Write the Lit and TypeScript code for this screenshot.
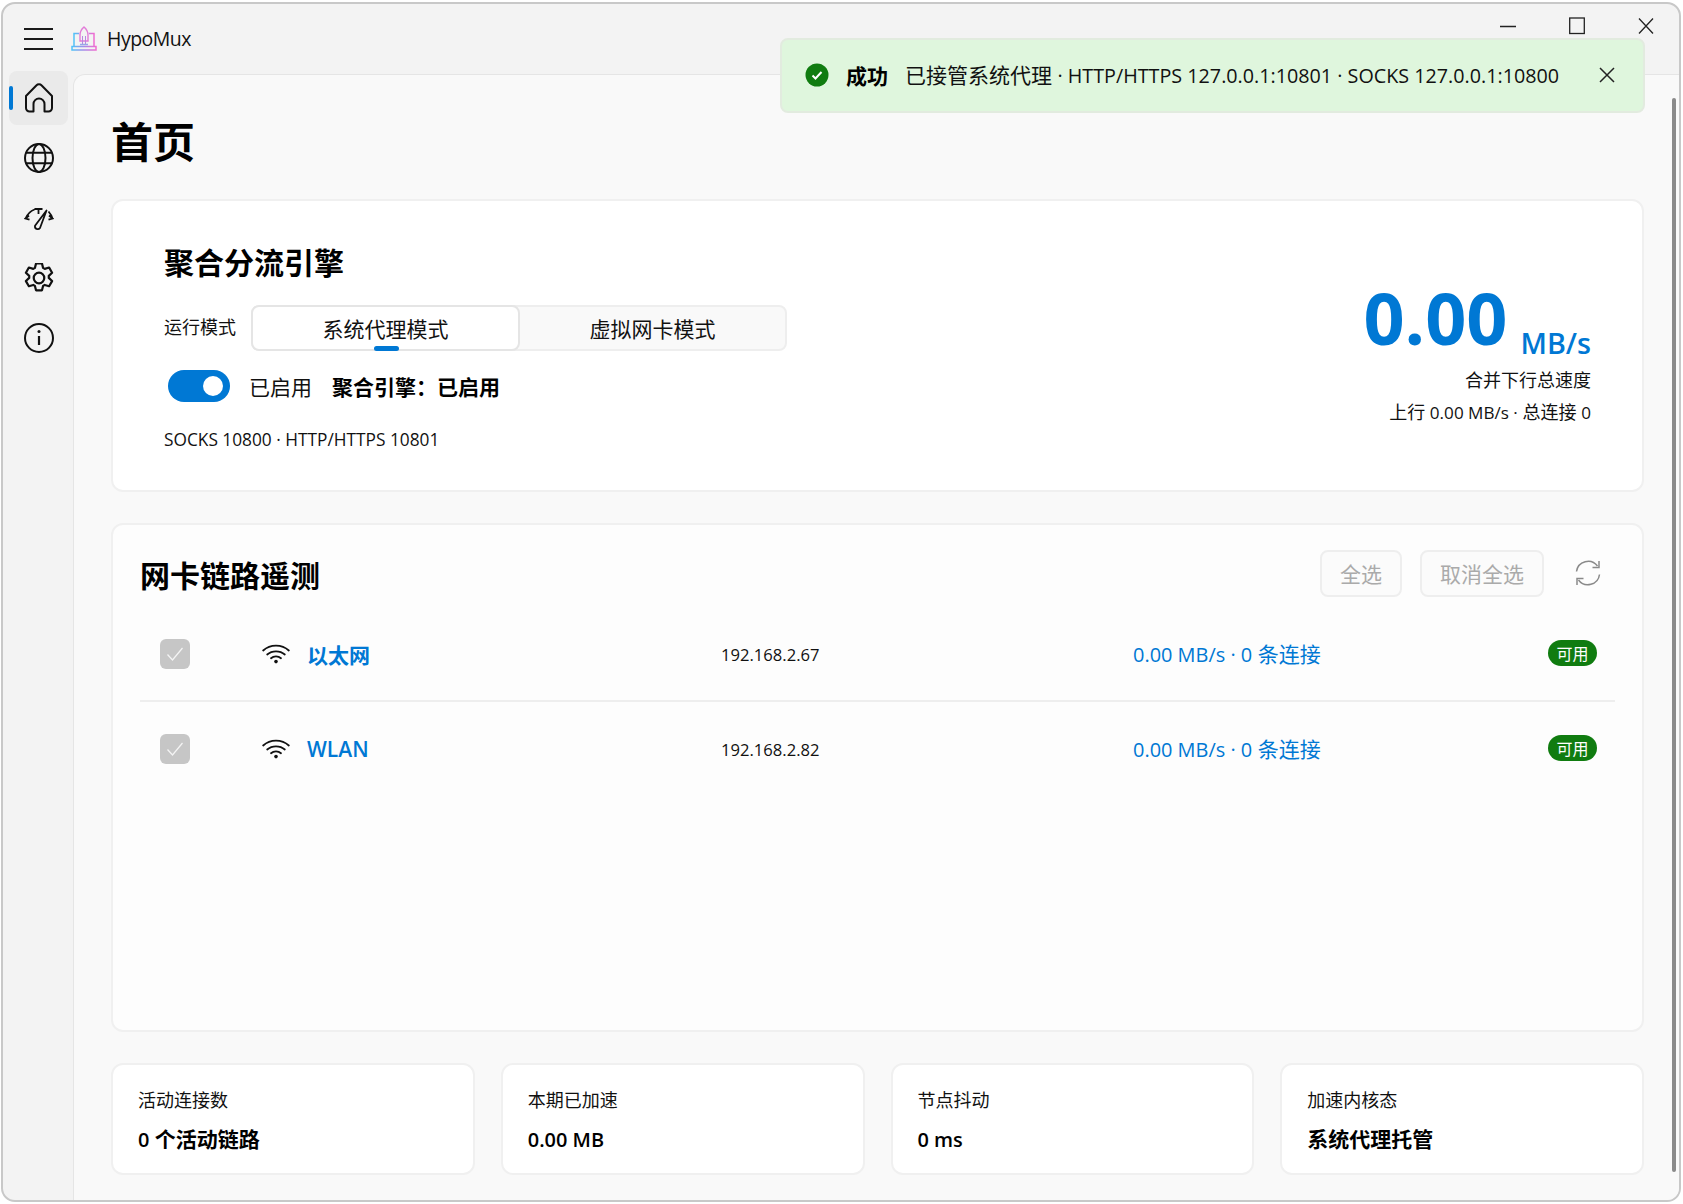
import { LitElement, html, css, svg } from 'lit';
import { customElement } from 'lit/decorators.js';

// latin runs get .lat so they come out closer to the reference's narrower latin face
const stats = [
  { label: '活动连接数', value: html`<span class="lat">0</span> 个活动链路` },
  { label: '本期已加速', value: html`<span class="lat">0.00 MB</span>` },
  { label: '节点抖动', value: html`<span class="lat">0 ms</span>` },
  { label: '加速内核态', value: html`系统代理托管` },
];

const adapters = [
  { name: '以太网', ip: '192.168.2.67', bold: true },
  { name: 'WLAN', ip: '192.168.2.82', bold: false },
];

const navIcons = [
  svg`<path d="M2 13 12.300 2.500a3.800 3.800 0 0 1 5.400 0L28 13v12a3.500 3.500 0 0 1-3.500 3.500h-4V21a5.500 5.500 0 0 0-11 0v7.500h-4A3.500 3.500 0 0 1 2 25Z" stroke-linejoin="round"/>`,
  svg`<circle cx="15" cy="15" r="14"/><ellipse cx="15" cy="15" rx="6.500" ry="14"/><path d="M2 9.700h26M2 20.300h26"/>`,
  svg`<path d="M1.500 15.500C3.500 11 6.500 8 10.500 6.500M24.500 8.500c1.800 2 3.200 4.300 4 7M10.500 6h8M14.500 6v5M5 12.500l-3.500 3 4 1.200M25 12.500l3.500 3-4 1.200" stroke-width="1.800"/><path d="M22.500 7.500 16 25a2.800 2.800 0 0 1-5-2.200Z" stroke-linejoin="round" stroke-width="1.800"/>`,
  svg`<g transform="translate(15 15) scale(1.100) translate(-15 -15)"><circle cx="15" cy="15" r="4.800"/><path d="M12.300 1.800h5.400l1 4 1.500.9 4-1.200 2.700 4.700-3 2.900v1.800l3 2.900-2.700 4.700-4-1.200-1.500.9-1 4h-5.400l-1-4-1.500-.9-4 1.200-2.700-4.700 3-2.900v-1.800l-3-2.900 2.700-4.700 4 1.200 1.500-.9Z" stroke-linejoin="round"/></g>`,
  svg`<circle cx="15" cy="15" r="14"/><path d="M15 13v9" stroke-width="2.200"/><circle cx="15" cy="8.500" r="1.500" fill="#111" stroke="none"/>`,
];

@customElement('app-root')
export class AppRoot extends LitElement {
  static styles = css`
    :host {
      display: block;
      width: 1683px;
      height: 1204px;
      background: #fff;
      font-family: 'Open Sans', 'Noto Sans CJK SC', sans-serif;
      color: #111;
      overflow: hidden;
    }
    .lat {
      font-size: 0.95em;
    }
    .window {
      position: relative;
      box-sizing: border-box;
      width: 1680px;
      height: 1200px;
      margin: 2px 0 0 1px;
      border: 2px solid #c8c8c8;
      border-radius: 14px;
      background: #f3f3f3;
      display: flex;
      flex-direction: column;
      overflow: hidden;
    }
    .titlebar {
      height: 70px;
      flex: none;
      display: flex;
      align-items: center;
      position: relative;
    }
    .burger {
      width: 29px;
      margin-left: 21px;
      margin-top: -1px;
      display: flex;
      flex-direction: column;
      gap: 8px;
    }
    .burger span {
      height: 2px;
      background: #1a1a1a;
    }
    .logo {
      margin-left: 18px;
      margin-top: -1px;
    }
    .app-name {
      margin-left: 10px;
      margin-top: -2px;
      font-size: 19.500px;
      letter-spacing: -0.5px;
    }
    .controls {
      position: absolute;
      top: 13px;
      right: 25px;
      display: flex;
      align-items: center;
      gap: 53px;
    }
    .body {
      flex: 1;
      display: flex;
      min-height: 0;
    }
    .sidebar {
      width: 70px;
      flex: none;
      margin-top: -3px;
      padding-left: 6px;
      box-sizing: border-box;
      display: flex;
      flex-direction: column;
      gap: 6px;
    }
    .nav {
      position: relative;
      width: 59px;
      height: 54px;
      border-radius: 8px;
      display: flex;
      align-items: center;
      justify-content: center;
    }
    .nav.active {
      background: #eaeaea;
    }
    .nav.active::before {
      content: '';
      position: absolute;
      left: 0;
      top: 15px;
      width: 4px;
      height: 24px;
      border-radius: 2px;
      background: #0078d4;
    }
    .nav svg {
      fill: none;
      stroke: #111;
      stroke-width: 2;
    }
    main {
      flex: 1;
      min-width: 0;
      box-sizing: border-box;
      background: #f9f9f9;
      border-left: 1px solid #e5e5e5;
      border-top: 1px solid #e5e5e5;
      border-top-left-radius: 12px;
      padding: 41px 35px 25px 37px;
      display: flex;
      flex-direction: column;
    }
    h1 {
      margin: 0 0 31px;
      font-size: 42px;
      line-height: 52px;
      font-weight: 700;
      color: #000;
    }
    .card {
      box-sizing: border-box;
      background: #fff;
      border: 2px solid #f0f0f0;
      border-radius: 12px;
    }
    .engine {
      height: 293px;
      flex: none;
      padding: 42px 51px 0 51px;
      display: flex;
      justify-content: space-between;
    }
    h2 {
      margin: 0;
      font-size: 30px;
      line-height: 40px;
      font-weight: 700;
      color: #000;
    }
    .mode-row {
      display: flex;
      align-items: center;
      margin-top: 22px;
      font-size: 18px;
    }
    .mode-label {
      width: 87px;
      margin-top: -5px;
    }
    .segments {
      width: 536px;
      height: 46px;
      box-sizing: border-box;
      display: flex;
      background: #f9f9f9;
      border: 2px solid #eeeeee;
      border-radius: 8px;
      font-size: 21px;
    }
    .segment {
      flex: 1;
      display: flex;
      align-items: center;
      justify-content: center;
      position: relative;
    }
    .segment.on {
      background: #fff;
      margin: -2px 0 -2px -2px;
      border: 2px solid #e5e5e5;
      border-radius: 8px;
    }
    .segment.on::after {
      content: '';
      position: absolute;
      left: 50%;
      margin-left: -12px;
      bottom: -2px;
      width: 25px;
      height: 5px;
      border-radius: 3px;
      background: #0078d4;
    }
    .switch-row {
      display: flex;
      align-items: center;
      margin: 19px 0 0 4px;
      font-size: 21px;
    }
    .switch {
      position: relative;
      width: 62px;
      height: 32px;
      border-radius: 16px;
      background: #0078d4;
      margin-right: 19px;
    }
    .switch::after {
      content: '';
      position: absolute;
      right: 7px;
      top: 6px;
      width: 20px;
      height: 20px;
      border-radius: 50%;
      background: #fff;
    }
    .switch-row b {
      margin-left: 20px;
      color: #000;
    }
    .ports {
      margin-top: 26px;
      font-size: 17.300px;
      line-height: 24px;
    }
    .speed {
      display: flex;
      flex-direction: column;
      align-items: flex-end;
      font-size: 18px;
    }
    .speed-main {
      color: #0078d4;
      margin-top: 33px;
      height: 88px;
      white-space: nowrap;
      line-height: 82px;
    }
    .speed-main strong {
      font-size: 72px;
      font-weight: 700;
    }
    .speed-main span {
      font-size: 28.700px;
      font-weight: 600;
      margin-left: 13px;
      vertical-align: -9px;
    }
    .speed div + div {
      line-height: 32px;
    }
    .links {
      flex: 1;
      min-height: 0;
      margin-top: 31px;
      padding: 24px 27px 0 27px;
      background: #fdfdfd;
    }
    .links-head {
      display: flex;
      align-items: center;
      height: 48px;
    }
    .links-head h2 {
      flex: 1;
      margin-top: 6px;
    }
    .btn {
      box-sizing: border-box;
      height: 47px;
      padding: 0 18px;
      display: flex;
      align-items: center;
      border: 2px solid #eeeeee;
      border-radius: 8px;
      background: #fbfbfb;
      color: #aaaaaa;
      font-size: 21px;
    }
    .btn + .btn {
      margin-left: 18px;
    }
    .refresh {
      margin: 0 13px 0 30px;
    }
    .row {
      display: grid;
      grid-template-columns: 102px 45px 414px 412px 1fr auto;
      align-items: center;
      height: 93px;
      padding-left: 20px;
      padding-right: 18px;
    }
    .row + .row {
      border-top: 2px solid #eeeeee;
    }
    .links-head + .row {
      margin-top: 10px;
    }
    .check {
      width: 30px;
      height: 30px;
      border-radius: 6px;
      background: #c6c6c6;
      display: flex;
      align-items: center;
      justify-content: center;
    }
    .name {
      color: #0078d4;
      font-size: 21px;
      font-weight: 600;
    }
    .name.bold {
      font-weight: 700;
    }
    .ip {
      font-size: 16.600px;
      margin-top: 1px;
    }
    .rate {
      color: #0078d4;
      font-size: 21px;
      margin-top: -1px;
    }
    .badge {
      width: 49px;
      height: 26px;
      margin-top: -2px;
      border-radius: 13px;
      background: #107c10;
      color: #fff;
      font-size: 16px;
      display: flex;
      align-items: center;
      justify-content: center;
    }
    .stats {
      flex: none;
      margin-top: 31px;
      height: 112px;
      display: grid;
      grid-template-columns: repeat(4, 1fr);
      gap: 26px;
    }
    .stat {
      padding: 23px 25px 0;
    }
    .stat-label {
      font-size: 18px;
      line-height: 24px;
    }
    .stat-value {
      margin-top: 13px;
      font-size: 21px;
      line-height: 28px;
      font-weight: 600;
      color: #000;
    }
    .scroll {
      position: absolute;
      left: 1669px;
      top: 94px;
      width: 4px;
      height: 1074px;
      border-radius: 2px;
      background: #8a8a8a;
    }
    .toast {
      position: absolute;
      left: 777px;
      top: 34px;
      width: 865px;
      height: 75px;
      box-sizing: border-box;
      background: #dff6dd;
      border: 2px solid #e2ebdf;
      border-radius: 8px;
      display: flex;
      align-items: center;
      padding: 0 0 2px 23px;
      font-size: 21px;
    }
    .toast svg {
      flex: none;
    }
    .toast b {
      margin: 0 17px 0 17px;
      color: #000;
    }
    .toast .msg {
      flex: 1;
      white-space: nowrap;
      margin-top: -1px;
    }
    .toast .msg .lat {
      font-size: 0.94em;
    }
    .toast .close {
      margin-right: 27px;
      display: flex;
    }
  `;

  private logo() {
    return html`<svg class="logo" width="26" height="26" viewBox="0 0 26 26" fill="none">
      <defs>
        <linearGradient id="lap" x1="0" x2="1" y1="0" y2="0">
          <stop offset="0" stop-color="#4fc3f7" />
          <stop offset="0.5" stop-color="#a78be8" />
          <stop offset="1" stop-color="#f06cd0" />
        </linearGradient>
      </defs>
      <path d="M3 20V7.500h5M23 20V7.500h-5" stroke="url(#lap)" stroke-width="1.500" />
      <path d="M1 20.500h24v3.500H1Z" stroke="url(#lap)" stroke-width="1.500" />
      <path d="M9 18.500h8" stroke="#9aa7e8" stroke-width="1.500" />
      <path d="M13 1c-3 2.500-4 5-4 8v6h8V9c0-3-1-5.500-4-8Z" stroke="#e27bd8" stroke-width="1.400" />
      <path d="M11.500 10v8M14.500 10v8" stroke="#b68ae0" stroke-width="1" />
    </svg>`;
  }

  private wifi() {
    return html`<svg width="28" height="20" viewBox="0 0 28 20" fill="none" stroke="#111" stroke-width="1.800" stroke-linecap="round">
      <path d="M1.200 6.500c7-6.500 18.600-6.500 25.600 0" />
      <path d="M5.200 10.500c4.800-4.300 12.800-4.300 17.600 0" />
      <path d="M9 14.200c2.800-2.400 7.200-2.400 10 0" />
      <circle cx="14" cy="17.600" r="1.800" fill="#111" stroke="none" />
    </svg>`;
  }

  render() {
    return html`
      <div class="window">
        <div class="titlebar">
          <div class="burger"><span></span><span></span><span></span></div>
          ${this.logo()}
          <span class="app-name">HypoMux</span>
          <div class="controls">
            <svg width="16" height="18" viewBox="0 0 16 18"><path d="M0 9.500h16" stroke="#222" stroke-width="1.300" /></svg>
            <svg width="16" height="18" viewBox="0 0 16 18" fill="none"><rect x="0.700" y="1" width="14.600" height="15.500" stroke="#222" stroke-width="1.300" /></svg>
            <svg width="16" height="18" viewBox="0 0 16 18" fill="none"><path d="M1 1.500l14 15M15 1.500l-14 15" stroke="#222" stroke-width="1.300" /></svg>
          </div>
        </div>
        <div class="body">
          <div class="sidebar">
            ${navIcons.map(
              (icon, i) => html`<div class="nav ${i === 0 ? 'active' : ''}">
                <svg width="30" height="30" viewBox="0 0 30 30">${icon}</svg>
              </div>`,
            )}
          </div>
          <main>
            <h1>首页</h1>
            <section class="card engine">
              <div>
                <h2>聚合分流引擎</h2>
                <div class="mode-row">
                  <span class="mode-label">运行模式</span>
                  <div class="segments">
                    <div class="segment on">系统代理模式</div>
                    <div class="segment">虚拟网卡模式</div>
                  </div>
                </div>
                <div class="switch-row">
                  <div class="switch"></div>
                  <span>已启用</span>
                  <b>${'聚合引擎\uFF1A已启用'}</b>
                </div>
                <div class="ports">SOCKS 10800 · HTTP/HTTPS 10801</div>
              </div>
              <div class="speed">
                <div class="speed-main"><strong>0.00</strong><span>MB/s</span></div>
                <div>合并下行总速度</div>
                <div>上行 <span class="lat">0.00 MB/s ·</span> 总连接 <span class="lat">0</span></div>
              </div>
            </section>
            <section class="card links">
              <div class="links-head">
                <h2>网卡链路遥测</h2>
                <div class="btn">全选</div>
                <div class="btn">取消全选</div>
                <svg class="refresh" width="28" height="28" viewBox="0 0 28 28" fill="none" stroke="#8a8a8a" stroke-width="1.500">
                  <path d="M2.500 12.500A11.700 11.700 0 0 1 23.500 7M25.500 15.500A11.700 11.700 0 0 1 4.500 21" />
                  <path d="M25 2v6.500h-6.500M3 26v-6.500h6.500" />
                </svg>
              </div>
              ${adapters.map(
                (a) => html`<div class="row">
                  <div class="check">
                    <svg width="18" height="16" viewBox="0 0 18 16" fill="none"><path d="M1.500 8.500l5 5.500L16.500 2" stroke="#f4f4f4" stroke-width="1.300" /></svg>
                  </div>
                  ${this.wifi()}
                  <div class="name ${a.bold ? 'bold' : ''}">${a.name}</div>
                  <div class="ip">${a.ip}</div>
                  <div class="rate"><span class="lat">0.00 MB/s · 0</span> 条连接</div>
                  <div class="badge">可用</div>
                </div>`,
              )}
            </section>
            <section class="stats">
              ${stats.map(
                (s) => html`<div class="card stat">
                  <div class="stat-label">${s.label}</div>
                  <div class="stat-value">${s.value}</div>
                </div>`,
              )}
            </section>
          </main>
        </div>
        <div class="scroll"></div>
        <div class="toast">
          <svg width="24" height="24" viewBox="0 0 24 24">
            <circle cx="12" cy="12" r="11.500" fill="#107c10" />
            <path d="M7.500 12.500l3 3 6-6.500" fill="none" stroke="#fff" stroke-width="2" />
          </svg>
          <b>成功</b>
          <span class="msg">已接管系统代理 <span class="lat">· HTTP/HTTPS 127.0.0.1:10801 · SOCKS 127.0.0.1:10800</span></span>
          <span class="close">
            <svg width="18" height="18" viewBox="0 0 18 18" fill="none"><path d="M2 2l14 14M16 2L2 16" stroke="#222" stroke-width="1.500" /></svg>
          </span>
        </div>
      </div>
    `;
  }
}
